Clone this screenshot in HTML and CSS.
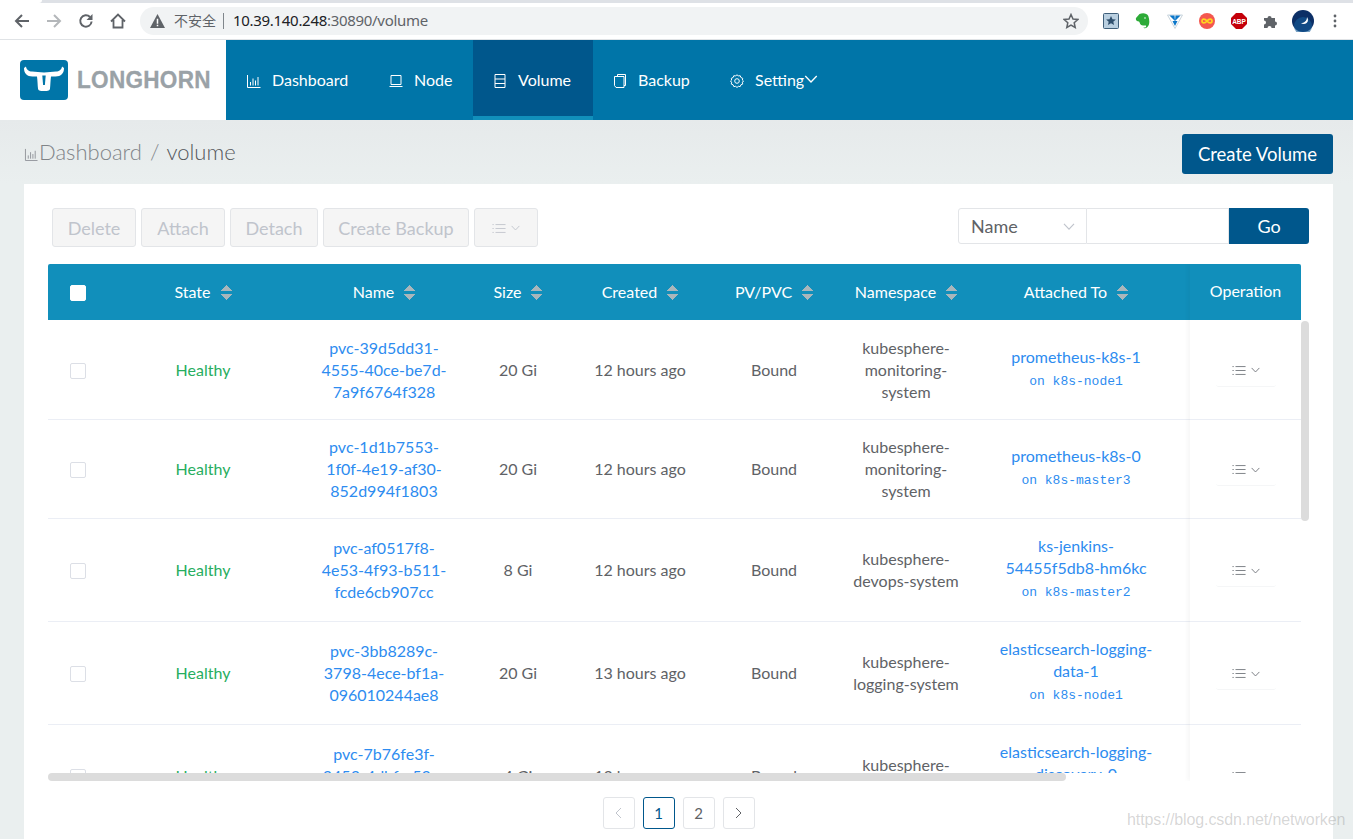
FILE: index.html
```html
<!DOCTYPE html>
<html lang="en">
<head>
<meta charset="utf-8">
<title>Longhorn volume</title>
<link rel="stylesheet" href="styles.css">
</head>
<body>
<svg class="defs" width="0" height="0" aria-hidden="true">
  <symbol id="i-dash" viewBox="0 0 14 14"><path d="M.5 1v12.500h13M3.500 8v3.500M6 4.500v7M8.500 6.500v5M11 3v8.500" fill="none" stroke="currentColor"/></symbol>
  <symbol id="i-list" viewBox="0 0 16 12"><path d="M4 1.500h11.500M4 6h11.500M4 10.500h11.500" fill="none" stroke="currentColor"/><path d="M.5 1.500h1.500M.5 6h1.500M.5 10.500h1.500" fill="none" stroke="currentColor"/></symbol>
  <symbol id="i-down" viewBox="0 0 10 6"><path d="M.7.7 5 5.200 9.300.7" fill="none" stroke="currentColor"/></symbol>
</svg>

<div class="chrome">
  <div class="tabstrip"><span class="tab"></span></div>
  <div class="toolbar">
    <svg class="tool" viewBox="0 0 16 16"><path d="M15 8H2.500M8 2 2 8l6 6" fill="none" stroke="#5f6368" stroke-width="2"/></svg>
    <svg class="tool" viewBox="0 0 16 16"><path d="M1 8h12.500M8 2l6 6-6 6" fill="none" stroke="#b4b7ba" stroke-width="2"/></svg>
    <svg class="tool" viewBox="0 0 16 16"><path d="M13.600 8.500A5.700 5.700 0 1 1 12 4" fill="none" stroke="#5f6368" stroke-width="2"/><path d="M14.500 1v6h-6z" fill="#5f6368"/></svg>
    <svg class="tool" viewBox="0 0 16 16"><path d="M1 8.500 8 1.500l7 7M3.500 7v7.500h9V7" fill="none" stroke="#5f6368" stroke-width="1.800"/></svg>
    <div class="omnibox">
      <svg class="warn" viewBox="0 0 14 13"><path d="M7 0 14 13H0z" fill="#5f6368"/><path d="M6.300 4.500h1.400v4.500H6.300zM6.300 10h1.400v1.500H6.300z" fill="#fff"/></svg>
      <span class="insecure">不安全</span>
      <span class="sep"></span>
      <span class="host">10.39.140.248</span><span class="path">:30890/volume</span>
      <svg class="star" viewBox="0 0 16 16"><path d="m8 1.500 2 4.500 4.800.5-3.600 3.200 1 4.800L8 12l-4.200 2.500 1-4.800L1.200 6.500 6 6z" fill="none" stroke="#5f6368" stroke-width="1.500"/></svg>
    </div>
    <div class="extensions">
      <svg class="ext" viewBox="0 0 16 16"><rect x=".5" y=".5" width="15" height="15" rx="1" fill="#b9cfe0" stroke="#3f5f7a"/><path d="m8 3 1.500 3.200 3.400.3-2.600 2.200.8 3.400L8 10.300l-3.100 1.800.8-3.400-2.600-2.200 3.400-.3z" fill="#2f4f6d"/></svg>
      <svg class="ext" viewBox="0 0 16 16"><path d="M1 5 4.500 1c3-1.300 7.500-1 8.800 2 1.200 3 1.400 7.500.2 9.500-1 2.300-4.500 4-5 1.500 1 1 3.200.6 2.500-1.500H8C5 12.500 5 9.500 4 8.500 1.500 8.500.5 7 1 5z" fill="#2dab38"/><circle cx="10" cy="5" r=".8" fill="#fff"/></svg>
      <svg class="ext" viewBox="0 0 16 16"><path d="M.5 2h15L8 15.500z" fill="#fff" stroke="#c9d4dc"/><path d="M2.500 2.500h5L8 8zM13.500 2.500h-5L8 8zM5.500 8h5L8 13z" fill="#0a76c9"/></svg>
      <svg class="ext" viewBox="0 0 16 16"><circle cx="8" cy="8" r="8" fill="#f4574f"/><path d="M8 8C6 5.500 3 5.500 3 8s3 2.500 5 0 5-2.500 5 0-3 2.500-5 0" fill="none" stroke="#ffd51f" stroke-width="1.700"/></svg>
      <svg class="ext" viewBox="0 0 16 16"><path d="M5 0h6l5 5v6l-5 5H5l-5-5V5z" fill="#c4000a"/><text x="8" y="10.800" class="abp">ABP</text></svg>
      <svg class="ext" viewBox="0 0 16 16"><path d="M1 5h3.500a2 2 0 1 1 4 0H12v3.500a2 2 0 1 1 0 4V15H8.500a2 2 0 1 0-4 0H1v-3.500a2 2 0 1 0 0-4z" fill="#5f6368"/></svg>
      <svg class="avatar" viewBox="0 0 22 22"><circle cx="11" cy="11" r="11" fill="#0c2f66"/><circle cx="11" cy="16" r="9" fill="#155d9a" opacity=".6"/><path d="M15 7c0 4-3 6-6 6 2 2 7 1 7-3 0-1-.4-2-1-3z" fill="#fff"/></svg>
      <svg class="kebab" viewBox="0 0 4 14"><circle cx="2" cy="2" r="1.400" fill="#5f6368"/><circle cx="2" cy="7" r="1.400" fill="#5f6368"/><circle cx="2" cy="12" r="1.400" fill="#5f6368"/></svg>
    </div>
  </div>
</div>

<header class="topnav">
  <div class="brand">
    <svg class="logo" viewBox="0 0 48 40"><rect width="48" height="40" rx="4" fill="#0075a8"/><path d="M4 8c0 5.500 3 8.500 8.500 8.500h4.500c.6 4.500.6 9 1 12 .3 2 1.500 2.500 6 2.500s5.700-.5 6-2.500c.4-3 .4-7.500 1-12h4.500c5.500 0 8.500-3 8.500-8.500l-2-1.500c-.5 3.500-3 5-6 5-4 0-7.500 1-12 1s-8-1-12-1c-3 0-5.500-1.500-6-5z" fill="#fff"/><path d="M22.300 15.500h3.400l-.8 9.500h-1.800z" fill="#0075a8"/></svg>
    <span class="wordmark">LONGHORN</span>
  </div>
  <nav class="menu">
    <a class="menu-item w-dash"><svg class="nav-ico"><use href="#i-dash"/></svg>Dashboard</a>
    <a class="menu-item w-node"><svg class="nav-ico" viewBox="0 0 14 14"><path d="M2 1.500h10v9H2zM.5 12.500h13" fill="none" stroke="currentColor"/></svg>Node</a>
    <a class="menu-item w-vol active"><svg class="nav-ico" viewBox="0 0 14 14"><path d="M2 .5h10v13H2zM2 5h10M2 9.500h10" fill="none" stroke="currentColor"/></svg>Volume</a>
    <a class="menu-item w-back"><svg class="nav-ico" viewBox="0 0 14 14"><path d="M4.500 2V.5h8v11H11M1.500 2.500H11v11H3l-1.500-2z" fill="none" stroke="currentColor"/></svg>Backup</a>
    <a class="menu-item"><svg class="nav-ico" viewBox="0 0 14 14"><path d="M7 .7 8.300 2l1.900-.3.700 1.800 1.800.8-.3 1.800L13.500 7l-1.100 1.200.3 1.900-1.800.7-.7 1.800-1.900-.3L7 13.500l-1.300-1.200-1.900.3-.7-1.800-1.800-.7.3-1.900L.5 7l1.100-.9-.3-1.800 1.800-.8.700-1.800 1.900.3z" fill="none" stroke="currentColor"/><circle cx="7" cy="7" r="2.300" fill="none" stroke="currentColor"/></svg>Setting<svg class="nav-caret"><use href="#i-down"/></svg></a>
  </nav>
</header>

<main class="page">
  <div class="crumbbar">
    <div class="crumbs">
      <svg class="crumb-ico"><use href="#i-dash"/></svg><span class="crumb-link">Dashboard</span><span class="crumb-sep">/</span><span class="crumb-cur">volume</span>
    </div>
    <button class="btn-primary">Create Volume</button>
  </div>

  <section class="card">
    <div class="actions">
      <div class="bulk">
        <button class="btn-off w-delete">Delete</button>
        <button class="btn-off w-attach">Attach</button>
        <button class="btn-off w-detach">Detach</button>
        <button class="btn-off w-create">Create Backup</button>
        <button class="btn-off w-more"><svg class="list-ico"><use href="#i-list"/></svg><svg class="caret"><use href="#i-down"/></svg></button>
      </div>
      <div class="search">
        <div class="select">Name<svg class="caret sel-caret"><use href="#i-down"/></svg></div>
        <div class="input"></div>
        <button class="go">Go</button>
      </div>
    </div>

    <div class="table">
      <div class="row head">
        <div class="cell"><span class="check on"></span></div>
        <div class="cell">State<span class="sort"></span></div>
        <div class="cell">Name<span class="sort"></span></div>
        <div class="cell">Size<span class="sort"></span></div>
        <div class="cell">Created<span class="sort"></span></div>
        <div class="cell">PV/PVC<span class="sort"></span></div>
        <div class="cell">Namespace<span class="sort"></span></div>
        <div class="cell">Attached To<span class="sort"></span></div>
        <div class="cell op-head">Operation</div>
      </div>
      <div class="body">
        <div class="row r100">
          <div class="cell"><span class="check"></span></div>
          <div class="cell ok">Healthy</div>
          <div class="cell"><a class="link name">pvc-39d5dd31-4555-40ce-be7d-7a9f6764f328</a></div>
          <div class="cell">20 Gi</div>
          <div class="cell">12 hours ago</div>
          <div class="cell">Bound</div>
          <div class="cell"><span class="ns">kubesphere-monitoring-system</span></div>
          <div class="cell col"><a class="link att">prometheus-k8s-1</a><span class="on">on k8s-node1</span></div>
          <div class="cell op"><span class="op-btn"><svg class="list-ico"><use href="#i-list"/></svg><svg class="caret"><use href="#i-down"/></svg></span></div>
        </div>
        <div class="row r99">
          <div class="cell"><span class="check"></span></div>
          <div class="cell ok">Healthy</div>
          <div class="cell"><a class="link name">pvc-1d1b7553-1f0f-4e19-af30-852d994f1803</a></div>
          <div class="cell">20 Gi</div>
          <div class="cell">12 hours ago</div>
          <div class="cell">Bound</div>
          <div class="cell"><span class="ns">kubesphere-monitoring-system</span></div>
          <div class="cell col"><a class="link att">prometheus-k8s-0</a><span class="on">on k8s-master3</span></div>
          <div class="cell op"><span class="op-btn"><svg class="list-ico"><use href="#i-list"/></svg><svg class="caret"><use href="#i-down"/></svg></span></div>
        </div>
        <div class="row r103">
          <div class="cell"><span class="check"></span></div>
          <div class="cell ok">Healthy</div>
          <div class="cell"><a class="link name">pvc-af0517f8-4e53-4f93-b511-fcde6cb907cc</a></div>
          <div class="cell">8 Gi</div>
          <div class="cell">12 hours ago</div>
          <div class="cell">Bound</div>
          <div class="cell"><span class="ns">kubesphere-devops-system</span></div>
          <div class="cell col"><a class="link att">ks-jenkins-54455f5db8-hm6kc</a><span class="on">on k8s-master2</span></div>
          <div class="cell op"><span class="op-btn"><svg class="list-ico"><use href="#i-list"/></svg><svg class="caret"><use href="#i-down"/></svg></span></div>
        </div>
        <div class="row r103">
          <div class="cell"><span class="check"></span></div>
          <div class="cell ok">Healthy</div>
          <div class="cell"><a class="link name">pvc-3bb8289c-3798-4ece-bf1a-096010244ae8</a></div>
          <div class="cell">20 Gi</div>
          <div class="cell">13 hours ago</div>
          <div class="cell">Bound</div>
          <div class="cell"><span class="ns">kubesphere-logging-system</span></div>
          <div class="cell col"><a class="link att">elasticsearch-logging-data-1</a><span class="on">on k8s-node1</span></div>
          <div class="cell op"><span class="op-btn"><svg class="list-ico"><use href="#i-list"/></svg><svg class="caret"><use href="#i-down"/></svg></span></div>
        </div>
        <div class="row r103">
          <div class="cell"><span class="check"></span></div>
          <div class="cell ok">Healthy</div>
          <div class="cell"><a class="link name">pvc-7b76fe3f-3453-4dbf-a53e-0f7c2a11d6e4</a></div>
          <div class="cell">4 Gi</div>
          <div class="cell">13 hours ago</div>
          <div class="cell">Bound</div>
          <div class="cell"><span class="ns">kubesphere-logging-system</span></div>
          <div class="cell col"><a class="link att">elasticsearch-logging-discovery-0</a><span class="on">on k8s-node1</span></div>
          <div class="cell op"><span class="op-btn"><svg class="list-ico"><use href="#i-list"/></svg><svg class="caret"><use href="#i-down"/></svg></span></div>
        </div>
      </div>
      <div class="op-shadow"></div>
      <div class="vbar"></div>
      <div class="hbar"></div>
    </div>

    <div class="pager">
      <span class="page-btn off"><svg class="chev" viewBox="0 0 7 12"><path d="M6 1 1 6l5 5" fill="none" stroke="currentColor"/></svg></span>
      <span class="page-btn cur">1</span>
      <span class="page-btn">2</span>
      <span class="page-btn"><svg class="chev" viewBox="0 0 7 12"><path d="m1 1 5 5-5 5" fill="none" stroke="currentColor"/></svg></span>
    </div>
  </section>
</main>
<div class="watermark">https://blog.csdn.net/networken</div>
</body>
</html>
```
FILE: styles.css
```css
* { box-sizing: border-box; }
html, body { margin: 0; height: 839px; overflow: hidden; }
body {
  font-family: "Lato", "Noto Sans", sans-serif;
  font-size: 16px;
  color: #606266;
  background: #eaefef;
  position: relative;
}
.defs { position: absolute; }

/* browser chrome */
.chrome { height: 40px; background: #fff; border-bottom: 1px solid #e0e3e6; }
.tabstrip { height: 3px; background: #dee1e6; }
.tab { display: block; width: 42px; height: 3px; background: #fff; border-radius: 0 0 6px 0; }
.toolbar { height: 36px; display: flex; align-items: center; padding-left: 14px; }
.tool { width: 16px; height: 16px; margin-right: 16px; flex: none; }
.omnibox {
  width: 948px; height: 28px; margin-left: -2px;
  background: #f1f3f4; border-radius: 14px;
  display: flex; align-items: center; padding-left: 10px;
  font-family: "Noto Sans", sans-serif; font-size: 15px; flex: none;
}
.warn { width: 15px; height: 14px; margin-right: 9px; flex: none; }
.insecure { font-family: "Noto Sans CJK SC", sans-serif; font-size: 14px; color: #5f6368; padding-bottom: 2px; }
.sep { width: 1px; height: 16px; background: #80868b; margin: 0 9px 0 7px; }
.host { color: #202124; letter-spacing: -.3px; padding-bottom: 2px; }
.path { color: #5f6368; letter-spacing: -.3px; padding-bottom: 2px; }
.star { width: 16px; height: 16px; margin-left: auto; margin-right: 9px; }
.extensions { display: flex; align-items: center; margin-left: 15px; }
.ext { width: 16px; height: 16px; margin-right: 16px; flex: none; }
.abp { font-family: "Liberation Sans", sans-serif; font-size: 6.500px; font-weight: 700; fill: #fff; text-anchor: middle; }
.avatar { width: 22px; height: 22px; margin: 0 19px 0 -3px; flex: none; }
.kebab { width: 4px; height: 14px; flex: none; }

/* top nav */
.topnav { height: 80px; display: flex; background: #0075a8; }
.brand { width: 226px; background: #fff; display: flex; align-items: center; padding-left: 20px; flex: none; }
.logo { width: 48px; height: 40px; flex: none; }
.wordmark {
  margin-left: 9px; font-family: "Liberation Sans", sans-serif; font-size: 23px; font-weight: 700;
  color: #9aa2a7; transform: scaleX(.98); transform-origin: left center; letter-spacing: .3px;
  -webkit-text-stroke: .3px #9aa2a7;
}
.menu { display: flex; }
.menu-item {
  display: flex; align-items: center; height: 80px; padding: 0 0 2px 20px;
  color: #fff; font-size: 16px;
}
.w-dash { width: 143px; padding-left: 21px; }
.w-node { width: 104px; }
.w-vol { width: 120px; }
.w-back { width: 117px; }
.active { background: #00578c; border-bottom: 4px solid #118fbb; padding-top: 2px; padding-bottom: 0; }
.nav-ico { width: 14px; height: 14px; margin: 3px 11px 0 0; flex: none; }
.nav-caret { width: 14px; height: 8px; }

/* page */
.page { padding: 0 20px 0 24px; background: linear-gradient(#e6eaeb, #eaefef 64px); }
.crumbbar { height: 64px; display: flex; align-items: flex-start; justify-content: space-between; }
.crumbs { display: flex; align-items: center; height: 63px; font-size: 22px; font-weight: 300; color: #808488; }
.crumb-ico { width: 15px; height: 13px; color: #909399; margin-top: 5px; }
.crumb-sep { margin: 0 7px 0 8px; }
.crumb-cur { color: #54575c; }
.btn-primary {
  margin-top: 14px; width: 151px; height: 40px; border: 0; border-radius: 3px;
  background: #00578c; color: #fff; font: 18.500px "Lato", sans-serif;
}

.card { background: #fff; width: 1309px; height: 655px; padding: 24px 24px 0; }
.actions { display: flex; justify-content: space-between; height: 56px; }
.bulk { display: flex; gap: 5px; padding-left: 4px; height: 39px; }
.btn-off {
  height: 39px; border: 1px solid #e3e5e8; border-radius: 3px; background: #f5f5f5;
  color: #c0c4cc; font: 18px "Lato", sans-serif; padding: 1px 0 0;
  display: flex; align-items: center; justify-content: center;
}
.w-delete, .w-attach { width: 84px; }
.w-detach { width: 88px; }
.w-create { width: 146px; }
.w-more { width: 64px; }
.list-ico { width: 14px; height: 11px; }
.caret { width: 9px; height: 6px; margin-left: 5px; }
.search { display: flex; height: 36px; width: 351px; }
.select {
  width: 129px; border: 1px solid #e3e5e8; border-radius: 3px 0 0 3px; padding-left: 12px;
  display: flex; align-items: center; justify-content: space-between; font-size: 18px; color: #606266; padding-right: 11px;
}
.sel-caret { width: 12px; height: 7px; color: #c0c4cc; }
.input { width: 142px; border: 1px solid #e3e5e8; border-left: 0; }
.go { width: 80px; border: 0; border-radius: 0 3px 3px 0; background: #00578c; color: #fff; font: 18px "Lato", sans-serif; }

/* table */
.table { position: relative; width: 1261px; height: 517px; overflow: hidden; }
.row {
  display: grid;
  grid-template-columns: 60px 190px 172px 96px 148px 120px 144px 196px 127px;
  width: 1253px;
  border-bottom: 1px solid #ebeef5;
}
.head { height: 56px; background: #118fbb; color: #fff; border: 0; border-radius: 2px 2px 0 0; }
.cell { display: flex; align-items: center; justify-content: center; text-align: center; line-height: 22px; color: inherit; }
.col { flex-direction: column; }
.r100 { height: 100px; }
.r99 { height: 99px; }
.r103 { height: 103px; }
.body { height: 453px; overflow: hidden; }
.ok { color: #27ae60; }
.link { color: #2d8cf0; }
.name { width: 136px; overflow-wrap: anywhere; }
.ns { width: 116px; }
.att { width: 165px; }
.on { font: 13px/24px "Liberation Mono", monospace; color: #2d8cf0; margin-top: 2px; }
.check { width: 16px; height: 16px; margin-top: 2px; border: 1px solid #dcdfe6; border-radius: 2px; background: #fff; }
.check.on { border-color: #fff; }
.sort {
  width: 11px; height: 17px; margin-left: 10px; flex: none;
  background:
    linear-gradient(to bottom right, transparent 50%, #a9b6bb 50%) left top / 6px 7px no-repeat,
    linear-gradient(to bottom left, transparent 50%, #a9b6bb 50%) right top / 6px 7px no-repeat,
    linear-gradient(to top right, transparent 50%, #a9b6bb 50%) left bottom / 6px 7px no-repeat,
    linear-gradient(to top left, transparent 50%, #a9b6bb 50%) right bottom / 6px 7px no-repeat;
}
.op-head { padding: 0 0 2px 16px; }
.op { padding-left: 16px; }
.op-btn {
  width: 60px; height: 34px; padding-top: 2px; display: flex; align-items: center; justify-content: center;
  color: #6f7379; border-bottom: 1px solid #f5f6f7; border-radius: 3px;
}
.op-shadow {
  position: absolute; left: 1142px; top: 0; width: 111px; height: 100%;
  box-shadow: -3px 0 4px rgba(0, 0, 0, .03);
  pointer-events: none;
}
.vbar { position: absolute; left: 1253px; top: 57px; width: 8px; height: 200px; border-radius: 4px; background: #dcdcdc; }
.hbar { position: absolute; left: 0; top: 509px; width: 1018px; height: 8px; border-radius: 4px; background: #dcdcdc; }

.pager { display: flex; justify-content: center; gap: 8px; margin-top: 16px; width: 1261px; }
.page-btn {
  width: 32px; height: 32px; border: 1px solid #e3e5e8; border-radius: 3px;
  display: flex; align-items: center; justify-content: center; font-size: 15px; color: #606266;
}
.page-btn.cur { border-color: #00578c; color: #00578c; }
.page-btn.off { color: #c0c4cc; }
.chev { width: 7px; height: 12px; }

.watermark {
  position: absolute; left: 1127px; top: 811px;
  font: 16px "Liberation Sans", sans-serif; color: rgba(130, 130, 130, .32);
  white-space: nowrap; letter-spacing: -.1px;
}
```
